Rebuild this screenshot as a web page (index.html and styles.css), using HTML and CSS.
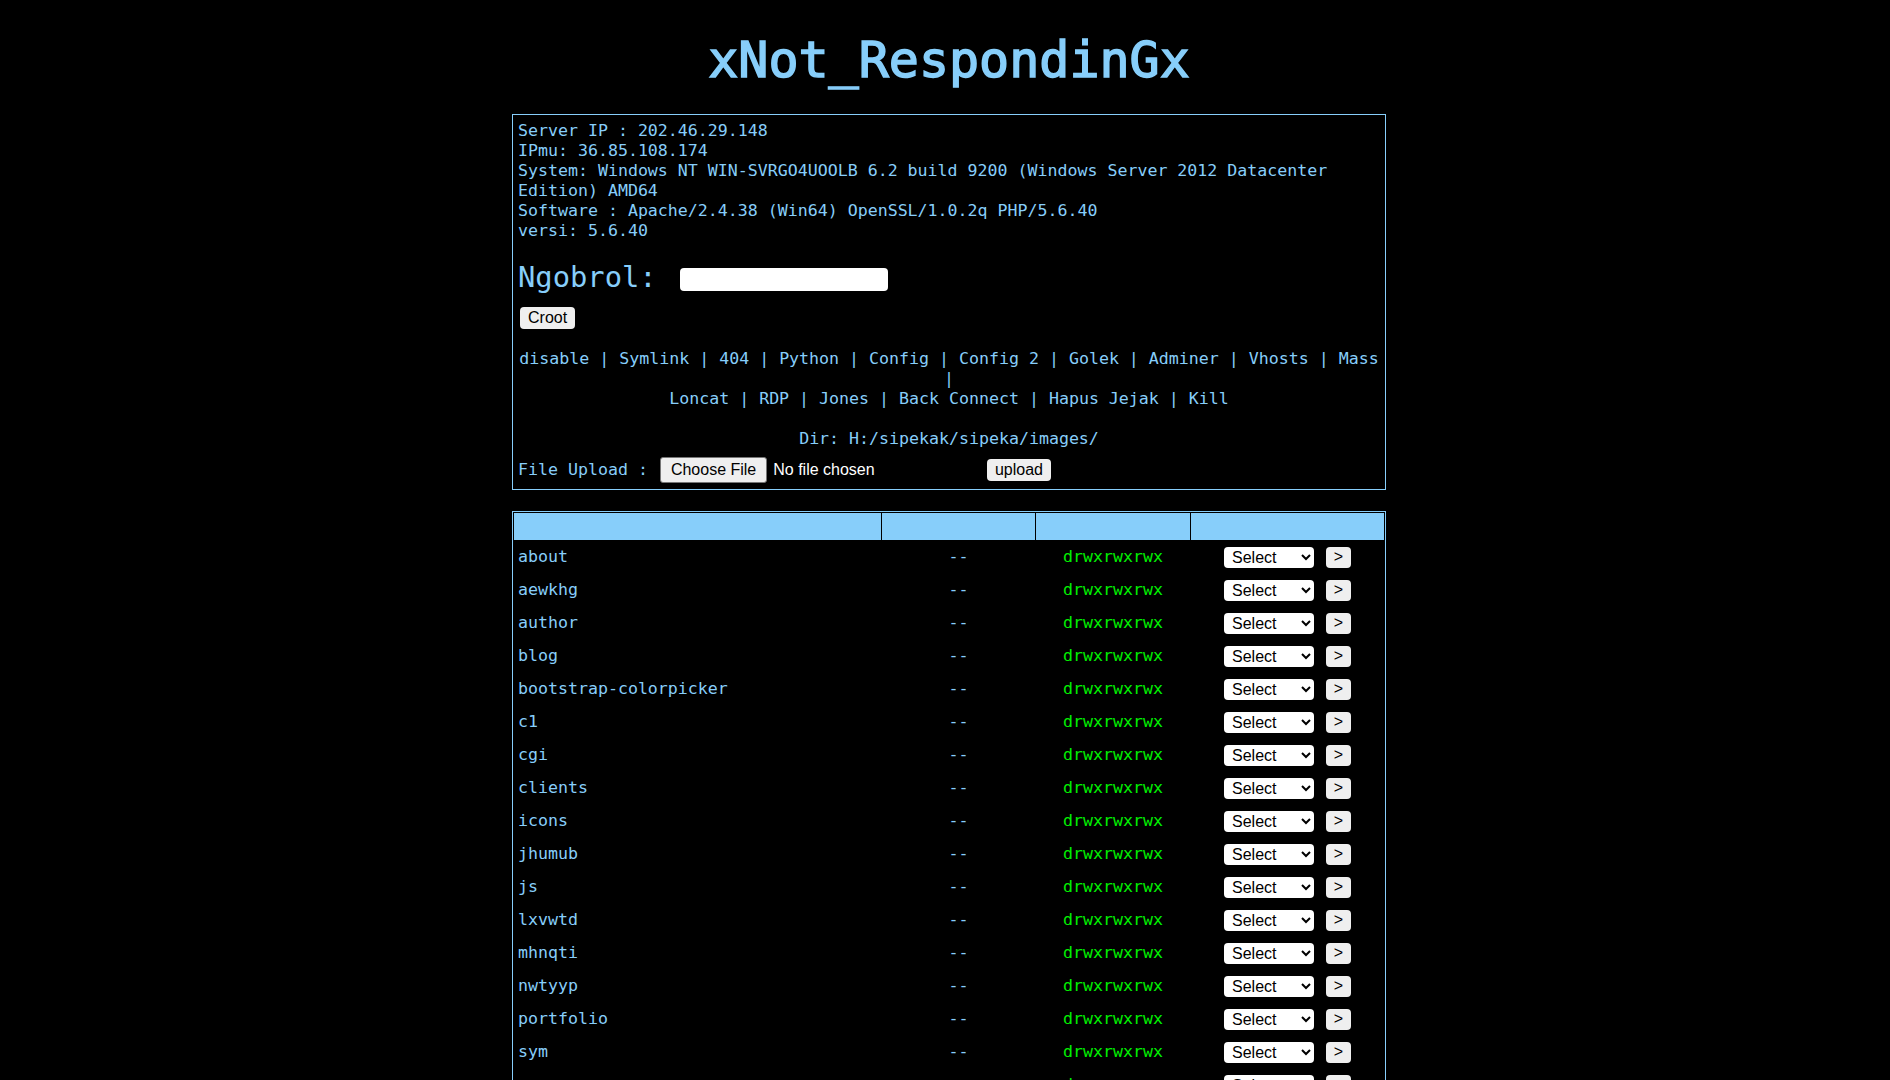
FILE: index.html
```html
<!DOCTYPE html>
<html lang="id">

<head>
    <meta charset="UTF-8">
    <meta name="viewport" content="width=device-width, initial-scale=1.0">
    <title>xNot_RespondinGx</title>
    <link rel="stylesheet" href="styles.css">
</head>

<body>

    <h1 class="title">xNot_RespondinGx</h1>

    <div class="panel">
        <div class="info">
            Server IP : 202.46.29.148<br>
            IPmu: 36.85.108.174<br>
            System: Windows NT WIN-SVRGO4UOOLB 6.2 build 9200 (Windows Server 2012 Datacenter Edition) AMD64<br>
            Software : Apache/2.4.38 (Win64) OpenSSL/1.0.2q PHP/5.6.40<br>
            versi: 5.6.40
        </div>

        <form class="chat" onsubmit="return false">
            <div class="chat-row"><span>Ngobrol:</span><input type="text" class="chat-input"></div>
            <button type="submit" class="btn btn-croot">Croot</button>
        </form>

        <div class="menu">
            <a href="#">disable</a> | <a href="#">Symlink</a> | <a href="#">404</a> | <a href="#">Python</a> | <a href="#">Config</a> | <a href="#">Config 2</a> | <a href="#">Golek</a> | <a href="#">Adminer</a> | <a href="#">Vhosts</a> | <a href="#">Mass</a> |<br>
            <a href="#">Loncat</a> | <a href="#">RDP</a> | <a href="#">Jones</a> | <a href="#">Back Connect</a> | <a href="#">Hapus Jejak</a> | <a href="#">Kill</a>
        </div>

        <div class="dir">Dir: H:/sipekak/sipeka/images/</div>

        <form class="upload" onsubmit="return false">
            <span>File Upload :</span>
            <input type="file" class="file" name="file">
            <button type="submit" class="btn btn-upload">upload</button>
        </form>
    </div>

    <table class="files">
        <colgroup>
            <col class="col-name">
            <col class="col-size">
            <col class="col-perm">
            <col class="col-act">
        </colgroup>
        <tr>
            <th></th>
            <th></th>
            <th></th>
            <th></th>
        </tr>
        <tr><td class="name">about</td><td>--</td><td class="perm">drwxrwxrwx</td><td><select class="act"><option>Select</option></select><button class="btn btn-go">&gt;</button></td></tr>
        <tr><td class="name">aewkhg</td><td>--</td><td class="perm">drwxrwxrwx</td><td><select class="act"><option>Select</option></select><button class="btn btn-go">&gt;</button></td></tr>
        <tr><td class="name">author</td><td>--</td><td class="perm">drwxrwxrwx</td><td><select class="act"><option>Select</option></select><button class="btn btn-go">&gt;</button></td></tr>
        <tr><td class="name">blog</td><td>--</td><td class="perm">drwxrwxrwx</td><td><select class="act"><option>Select</option></select><button class="btn btn-go">&gt;</button></td></tr>
        <tr><td class="name">bootstrap-colorpicker</td><td>--</td><td class="perm">drwxrwxrwx</td><td><select class="act"><option>Select</option></select><button class="btn btn-go">&gt;</button></td></tr>
        <tr><td class="name">c1</td><td>--</td><td class="perm">drwxrwxrwx</td><td><select class="act"><option>Select</option></select><button class="btn btn-go">&gt;</button></td></tr>
        <tr><td class="name">cgi</td><td>--</td><td class="perm">drwxrwxrwx</td><td><select class="act"><option>Select</option></select><button class="btn btn-go">&gt;</button></td></tr>
        <tr><td class="name">clients</td><td>--</td><td class="perm">drwxrwxrwx</td><td><select class="act"><option>Select</option></select><button class="btn btn-go">&gt;</button></td></tr>
        <tr><td class="name">icons</td><td>--</td><td class="perm">drwxrwxrwx</td><td><select class="act"><option>Select</option></select><button class="btn btn-go">&gt;</button></td></tr>
        <tr><td class="name">jhumub</td><td>--</td><td class="perm">drwxrwxrwx</td><td><select class="act"><option>Select</option></select><button class="btn btn-go">&gt;</button></td></tr>
        <tr><td class="name">js</td><td>--</td><td class="perm">drwxrwxrwx</td><td><select class="act"><option>Select</option></select><button class="btn btn-go">&gt;</button></td></tr>
        <tr><td class="name">lxvwtd</td><td>--</td><td class="perm">drwxrwxrwx</td><td><select class="act"><option>Select</option></select><button class="btn btn-go">&gt;</button></td></tr>
        <tr><td class="name">mhnqti</td><td>--</td><td class="perm">drwxrwxrwx</td><td><select class="act"><option>Select</option></select><button class="btn btn-go">&gt;</button></td></tr>
        <tr><td class="name">nwtyyp</td><td>--</td><td class="perm">drwxrwxrwx</td><td><select class="act"><option>Select</option></select><button class="btn btn-go">&gt;</button></td></tr>
        <tr><td class="name">portfolio</td><td>--</td><td class="perm">drwxrwxrwx</td><td><select class="act"><option>Select</option></select><button class="btn btn-go">&gt;</button></td></tr>
        <tr><td class="name">sym</td><td>--</td><td class="perm">drwxrwxrwx</td><td><select class="act"><option>Select</option></select><button class="btn btn-go">&gt;</button></td></tr>
        <tr><td class="name">umum</td><td>--</td><td class="perm">drwxrwxrwx</td><td><select class="act"><option>Select</option></select><button class="btn btn-go">&gt;</button></td></tr>
        <tr><td class="name">vendor</td><td>--</td><td class="perm">drwxrwxrwx</td><td><select class="act"><option>Select</option></select><button class="btn btn-go">&gt;</button></td></tr>
    </table>

</body>

</html>
```

FILE: styles.css
```css
* {
    box-sizing: border-box;
}

html {
    scrollbar-width: none;
}

body {
    margin: 0;
    padding-left: 8px;
    background: #000;
    color: #87cefa;
    font-family: "DejaVu Sans Mono", monospace;
    font-size: 16.6px;
    line-height: 20px;
}

a {
    color: #87cefa;
    text-decoration: none;
}

.title {
    margin: 0 0 24px;
    padding-top: 30px;
    font-size: 50px;
    line-height: 60px;
    font-weight: normal;
    text-align: center;
    -webkit-text-stroke: 1.5px #87cefa;
}

.panel {
    width: 874px;
    margin: 0 auto;
    padding: 6px 5px;
    border: 1px solid #87cefa;
}

/* ngobrol */
.chat {
    margin-top: 18px;
}

.chat-row {
    font-size: 28.8px;
    line-height: 36px;
}

.chat-input {
    width: 208px;
    height: 23px;
    margin-left: 23px;
    vertical-align: middle;
    border: none;
    border-radius: 4px;
    background: #fff;
}

.btn {
    height: 22px;
    padding: 0 8px;
    border: none;
    border-radius: 4px;
    background: #efefef;
    color: #000;
    font: 16px "Liberation Sans", Arial, sans-serif;
    cursor: pointer;
}

.btn-croot {
    display: block;
    margin: 12px 0 0 2px;
}

.menu {
    margin-top: 20px;
    text-align: center;
}

.dir {
    margin-top: 20px;
    text-align: center;
}

/* upload */
.upload {
    display: flex;
    align-items: center;
    margin-top: 8px;
}

.file {
    width: 323px;
    height: 26px;
    margin-left: 12px;
    color: #fff;
    font: 16px "Liberation Sans", Arial, sans-serif;
}

.file::file-selector-button {
    height: 26px;
    margin-right: 6px;
    padding: 0 10px;
    border: 1px solid #767676;
    border-radius: 3px;
    background: #efefef;
    color: #000;
    font: inherit;
}

.btn-upload {
    margin-left: 4px;
}

/* daftar file */
.files {
    width: 874px;
    margin: 21px auto 0;
    border: 1px solid #87cefa;
    border-spacing: 1px;
    table-layout: fixed;
}

.col-name {
    width: 367px;
}

.col-size {
    width: 153px;
}

.col-perm {
    width: 154px;
}

.col-act {
    width: 193px;
}

.files th {
    height: 27px;
    padding: 0;
    background: #87cefa;
}

.files td {
    height: 32px;
    padding: 0 4px;
    text-align: center;
    vertical-align: middle;
    white-space: nowrap;
}

.files td.name {
    text-align: left;
}

.files td.perm {
    color: #00f000;
}

.act {
    width: 90px;
    height: 21px;
    padding: 0 0 0 4px;
    vertical-align: middle;
    border: none;
    border-radius: 4px;
    background: #fff;
    color: #000;
    font: 16px "Liberation Sans", Arial, sans-serif;
}

.btn-go {
    width: 25px;
    height: 21px;
    margin-left: 12px;
    padding: 0;
    vertical-align: middle;
}
```
